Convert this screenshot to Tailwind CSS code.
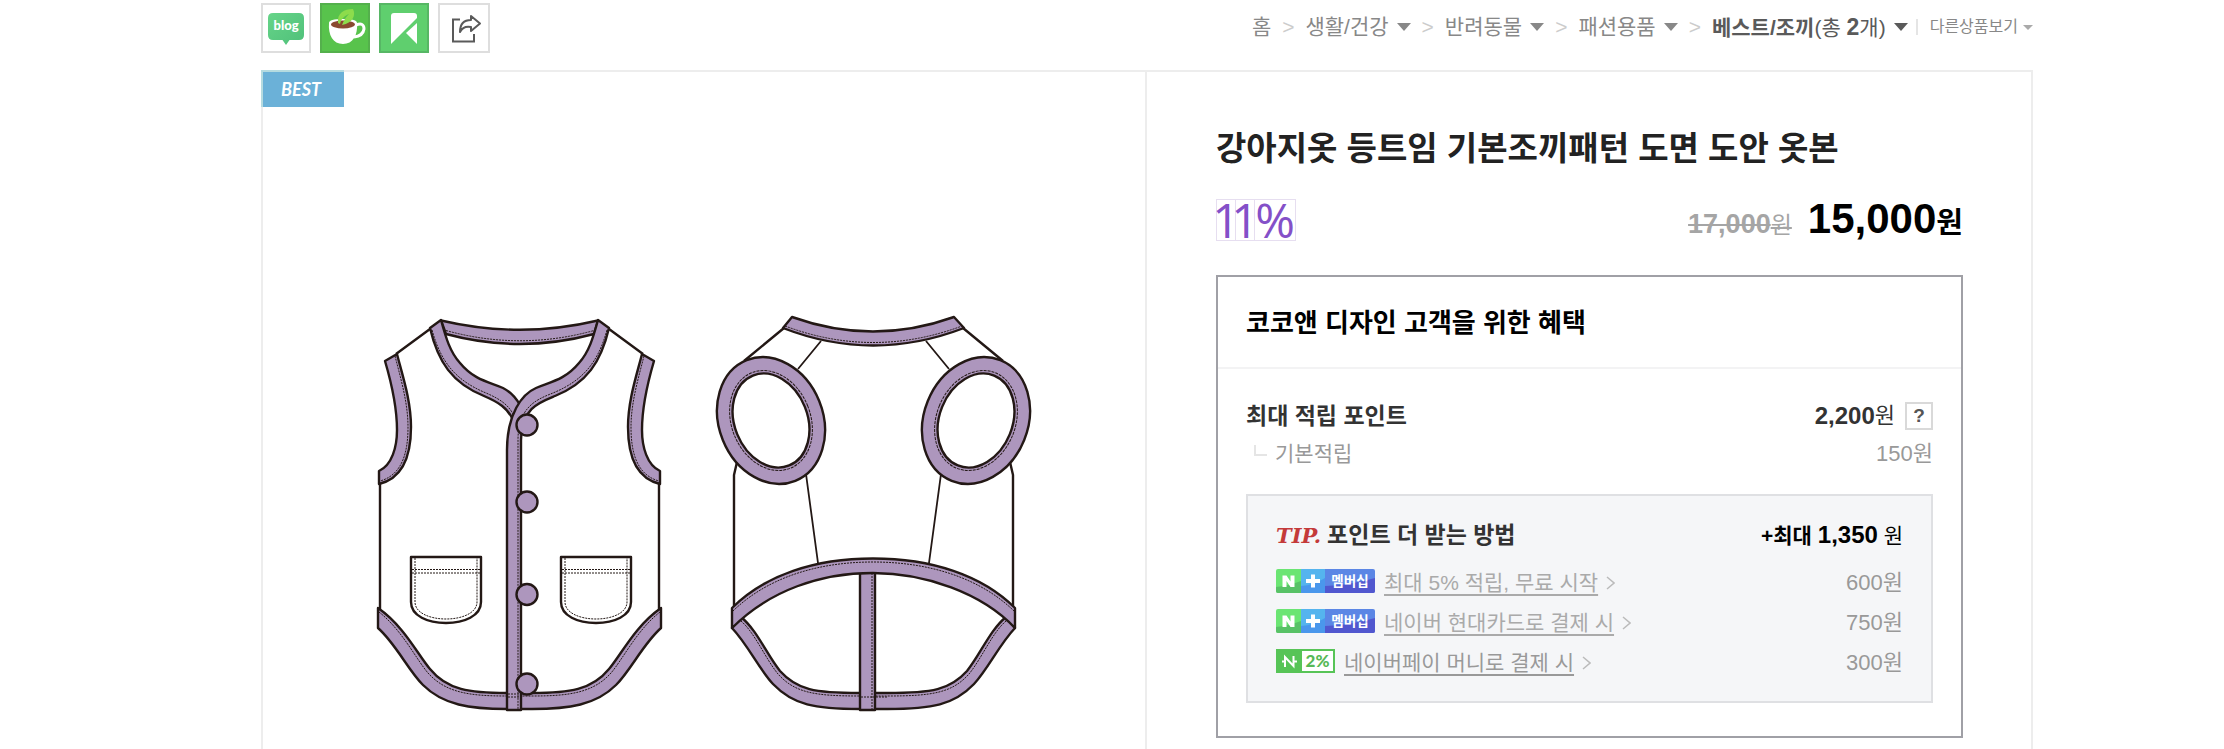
<!DOCTYPE html>
<html lang="ko">
<head>
  <meta charset="UTF-8" />
  <meta name="viewport" content="width=device-width, initial-scale=1" />
  <title>강아지옷 등트임 기본조끼패턴 도면 도안 옷본</title>
  <script src="https://cdn.jsdelivr.net/npm/@tailwindcss/browser@4"></script>
</head>
<body class="bg-white text-[#333] font-['Liberation_Sans','Noto_Sans_CJK_KR',sans-serif]">
  <div class="min-h-screen flex flex-col w-full max-w-[1842px] mx-auto pl-[70px] pt-[3px]">

    <!-- 상단: 공유 버튼 + 카테고리 경로 -->
    <header class="flex justify-between h-[50px] mb-[17px]">
      <div class="flex gap-[9px]">
        <a href="#" aria-label="블로그" class="block size-[50px] border-2 border-[#dedede] bg-white">
          <svg viewBox="0 0 46 46" class="size-full">
            <defs>
              <linearGradient id="blogBg" x1="0" y1="0" x2="1" y2="1">
                <stop offset="0" stop-color="#66d488" />
                <stop offset="1" stop-color="#4fc07a" />
              </linearGradient>
            </defs>
            <path d="M10 8H36Q41 8 41 13V30Q41 35 36 35H26.500L23 40L19.500 35H10Q5 35 5 30V13Q5 8 10 8Z" fill="url(#blogBg)" />
            <text x="23" y="25" text-anchor="middle" font-family="Lato" font-weight="900" font-size="13" fill="#fff">blog</text>
          </svg>
        </a>
        <a href="#" aria-label="카페" class="block size-[50px] border-2 border-[#54b04c] bg-[#58c34c]">
          <svg viewBox="0 0 46 46" class="size-full">
            <path d="M34 20Q42 17 42 24Q41 31 32 32" fill="none" stroke="#fff" stroke-width="3" />
            <path d="M7 18Q7 14 21 14T35 18C36 30 31 39 21 39S6 30 7 18Z" fill="#fff" />
            <ellipse cx="21" cy="19.500" rx="12" ry="4" fill="#8a4a30" />
            <path d="M16 18C15 8 22 4 31 4C34 10 31 18 20 20C22 15 24 12 27 9C22 11 19 14 18 19Z" fill="#8ddc4c" />
          </svg>
        </a>
        <a href="#" aria-label="북마크" class="block size-[50px] border-2 border-[#57b765] bg-[#5fcf6e]">
          <svg viewBox="0 0 46 46" class="size-full">
            <path d="M10 11Q10 8 13 8H33Q36 8 36 11V13L10 39Z" fill="#fff" />
            <path d="M36 18V39L25 28Z" fill="#fff" />
          </svg>
        </a>
        <button type="button" aria-label="공유" class="block w-[52px] h-[50px] border-2 border-[#dedede] bg-white">
          <svg viewBox="0 0 48 46" class="size-full" fill="none" stroke="#5a5a5a" stroke-width="2">
            <path d="M20 14.500H13V36.500H34V29" />
            <path d="M20 27C20 19 24 15 31 15V11L40 18.500L31 26V22C26 21 22 23 20 27Z" stroke-linejoin="round" />
          </svg>
        </button>
      </div>

      <nav class="flex items-center h-12 text-[21px] leading-8 text-[#888] whitespace-nowrap">
        <a href="#">홈</a>
        <span class="mx-[11px] text-[#ccc]">&gt;</span>
        <a href="#">생활/건강</a>
        <button type="button" aria-label="생활/건강 펼치기" class="ml-2"><svg class="w-[14px] h-[8px]" viewBox="0 0 14 8"><path d="M0 0H14L7 8Z" fill="#888" /></svg></button>
        <span class="mx-[11px] text-[#ccc]">&gt;</span>
        <a href="#">반려동물</a>
        <button type="button" aria-label="반려동물 펼치기" class="ml-2"><svg class="w-[14px] h-[8px]" viewBox="0 0 14 8"><path d="M0 0H14L7 8Z" fill="#888" /></svg></button>
        <span class="mx-[11px] text-[#ccc]">&gt;</span>
        <a href="#">패션용품</a>
        <button type="button" aria-label="패션용품 펼치기" class="ml-2"><svg class="w-[14px] h-[8px]" viewBox="0 0 14 8"><path d="M0 0H14L7 8Z" fill="#888" /></svg></button>
        <span class="mx-[11px] text-[#ccc]">&gt;</span>
        <a href="#" class="text-[#5a5a5a]"><strong>베스트/조끼</strong>(총 <strong class="text-[23px]">2</strong>개)</a>
        <button type="button" aria-label="베스트/조끼 펼치기" class="ml-2"><svg class="w-[14px] h-[8px]" viewBox="0 0 14 8"><path d="M0 0H14L7 8Z" fill="#5a5a5a" /></svg></button>
        <span class="w-[2px] h-4 ml-2 mr-3 bg-[#e5e5e5]"></span>
        <button type="button" class="flex items-center gap-[5px] text-[16px]">다른상품보기
          <svg class="w-[10px] h-[5px]" viewBox="0 0 10 5"><path d="M0 0H10L5 5Z" fill="#aaa" /></svg>
        </button>
      </nav>
    </header>

    <main class="grow grid grid-cols-2 border-2 border-b-0 border-[#ededed]">
      <!-- 상품 이미지 -->
      <section class="relative border-r-2 border-[#ededed] pl-[2px] pt-[228px]">
        <span class="absolute -left-[2px] -top-[2px] w-[83px] h-[37px] pl-[18px] border-l-2 border-t-2 border-[#b5dbe0] bg-[#6bb1d8] text-white text-[18px] leading-[34px] font-bold italic font-[Lato,sans-serif]">BEST</span>

        <svg class="block w-full max-w-[690px] mx-auto" viewBox="360 300 690 430" role="img" aria-label="강아지 조끼 도안" fill="none" stroke="#231815" stroke-width="2.400" stroke-linejoin="round">
          <defs>
            <g id="frontSide">
              <path d="M430 329L396 354M380 484V610" />
              <path d="M385 361L397 354C402 374 411 400 411 427C411 455 404 478 379 484V471C392 465 397 447 397 430C397 405 390 378 385 361Z" fill="#ad96bd" />
              <path d="M395 356C400 376 408 402 408 427C408 453 402 475 380 481" stroke-width="1" stroke-dasharray="2 1" />
              <path d="M378 608C404 626 418 655 430 669C447 690 470 693 507 693H520V709H507C470 709 443 705 423 685C408 670 396 644 378 628Z" fill="#ad96bd" />
              <path d="M379 612C402 630 416 659 428 673C446 693 470 696 507 696H520" stroke-width="1" stroke-dasharray="2 1" />
            </g>
            <g id="pocket">
              <path d="M411 557H481V602C481 616 464 623 446 623S411 616 411 602Z" />
              <path d="M415 558V602C415 613 430 619 446 619S477 613 477 602V558M412 569.500H480M412 573H480" stroke-width="1" stroke-dasharray="2 1" />
            </g>
            <g id="backSide">
              <path d="M784 328L744 361M737 462L734 475V609" />
              <path d="M821 341L798 369M806 474L818 563" stroke-width="1.800" />
              <g transform="translate(771 420.500) rotate(-22)">
                <ellipse rx="52" ry="65" fill="#ad96bd" />
                <ellipse rx="39.500" ry="51.500" stroke-width="1" stroke-dasharray="3 1" />
                <ellipse rx="36.500" ry="48.500" fill="#fff" />
              </g>
              <path d="M741 617C757 630 767 655 780 671C797 690 815 693 860 693H874V709H860C815 709 793 705 773 684C759 669 748 645 732 628Z" fill="#ad96bd" />
              <path d="M741 621C755 633 765 658 778 674C795 693 815 696 860 696H874" stroke-width="1" stroke-dasharray="2 1" />
            </g>
          </defs>

          <!-- 앞면 -->
          <use href="#frontSide" />
          <use href="#frontSide" transform="translate(1039 0) scale(-1 1)" />
          <use href="#pocket" />
          <use href="#pocket" transform="translate(150 0)" />
          <path d="M441 320.500Q520 339 598 320.500L594 334Q520 354 446 334Z" fill="#ad96bd" />
          <path d="M446 330.500Q520 351 594 330.500" stroke-width="1" stroke-dasharray="2 1" />
          <path d="M430 328L441 320C446 338 450 352 460 363C474 380 489 382 503 388C511 392 516 398 520 405L513 420C508 408 498 402 484 396C452 383 438 362 430 328Z" fill="#ad96bd" />
          <path d="M432 330C441 362 455 380 486 393C500 399 509 405 514 416" stroke-width="1" stroke-dasharray="2 1" />
          <path d="M609 328L598 320C593 338 589 352 579 363C565 380 550 382 536 388C522 394 507 414 507 450V710H521V440C521 408 540 402 555 396C587 383 601 362 609 328Z" fill="#ad96bd" />
          <path d="M607 330C598 362 584 380 553 393C538 399 518 406 518 440V709M508 694H520M508 697H520" stroke-width="1" stroke-dasharray="2 1" />
          <g fill="#ad96bd">
            <circle cx="527" cy="425" r="10.500" />
            <circle cx="527" cy="502" r="10.500" />
            <circle cx="527" cy="594.500" r="10.500" />
            <circle cx="527" cy="684" r="10.500" />
          </g>

          <!-- 뒷면 -->
          <use href="#backSide" />
          <use href="#backSide" transform="translate(1747 0) scale(-1 1)" />
          <path d="M792 317Q873 346 954 317L964 328Q873 363 783 328Z" fill="#ad96bd" />
          <path d="M785 326Q873 359 962 326" stroke-width="1" stroke-dasharray="2 1" />
          <path d="M860 571H875V710H860Z" fill="#ad96bd" />
          <path d="M872 573V709M861 697H887" stroke-width="1" stroke-dasharray="2 1" />
          <path d="M732 608C765 575 815 558.500 873 558.500S982 575 1015 608V628C982 593 925 573 873 573S770 590 732 628Z" fill="#ad96bd" />
          <path d="M733 611C766 579 815 562 873 562S981 579 1014 611" stroke-width="1" stroke-dasharray="2 1" />
        </svg>
      </section>

      <!-- 상품 정보 -->
      <section class="pl-[69px] pr-[68px] pt-[57px] pb-[11px]">
        <h1 class="text-[33px] leading-10 font-bold text-[#222]">강아지옷 등트임 기본조끼패턴 도면 도안 옷본</h1>

        <div class="flex justify-between items-start mt-[30px]">
          <p class="flex text-[48px] leading-10 text-[#8450c8] font-['Open_Sans',sans-serif]" aria-label="11%">
            <span class="w-[19px] border border-r-0 border-[#e6def0] flex justify-center">1</span>
            <span class="w-[19px] border border-r-0 border-[#e6def0] flex justify-center">1</span>
            <span class="w-[42px] border border-[#e6def0] flex justify-center">%</span>
          </p>
          <p class="flex items-baseline leading-[40px]">
            <del class="mr-4 text-[27px] font-bold text-[#a5a5a5]">17,000<span class="text-[23px] font-normal">원</span></del>
            <strong class="text-[42px] text-black">15,000<span class="text-[29px]">원</span></strong>
          </p>
        </div>

        <div class="mt-[30px] border-2 border-[#a0a0a6]">
          <h2 class="h-[92px] px-7 border-b-2 border-[#f3f3f4] text-[26px] leading-[92px] font-bold text-black">코코앤 디자인 고객을 위한 혜택</h2>

          <div class="px-7 pt-8 pb-[33px]">
            <div class="flex justify-between items-center h-[30px]">
              <strong class="text-[23px] leading-[30px]">최대 적립 포인트</strong>
              <span class="flex items-center text-[22px] leading-[30px]">
                <strong class="text-[24px]">2,200</strong>원
                <button type="button" aria-label="도움말" class="size-7 ml-[10px] border-2 border-[#d9d9d9] text-[19px] leading-6 font-bold text-[#555]">?</button>
              </span>
            </div>
            <div class="flex justify-between items-center h-[30px] mt-2 text-[#999]">
              <span class="flex items-center text-[21px] leading-[30px]">
                <i class="w-[13px] h-[11px] ml-2 mr-2 mb-2 border-l-2 border-b-2 border-[#e5e5e5]"></i>기본적립
              </span>
              <span class="text-[22px] leading-[30px]">150원</span>
            </div>

            <div class="mt-[25px] px-7 pt-6 pb-[18px] border-2 border-[#dfe0e3] bg-[#f5f6f8]">
              <div class="flex justify-between items-center h-[30px]">
                <h3 class="flex items-baseline text-[23px] leading-[30px] font-bold"><em class="mr-[6px] text-[21px] text-[#c43a3a] font-['DejaVu_Serif',serif]">TIP.</em>포인트 더 받는 방법</h3>
                <span class="text-[21px] leading-[30px] text-black"><strong>+최대 <span class="text-[24px]">1,350</span></strong> 원</span>
              </div>

              <ul class="mt-[13px] text-[#999]">
                <li class="flex justify-between items-center h-10">
                  <a href="#" class="flex items-center text-[21px] leading-[30px] text-[#aaa]">
                    <svg class="w-[99px] h-6 mr-[9px] mb-1" viewBox="0 0 99 24" aria-label="네이버플러스 멤버십">
                      <defs>
                        <clipPath id="badgeClip"><rect width="99" height="24" rx="2" /></clipPath>
                        <g id="plusBadge" clip-path="url(#badgeClip)">
                          <path d="M0 0H25V24H0Z" fill="#6be573" />
                          <path d="M0 18Q12 17 25 12V24H0Z" fill="#58c267" />
                          <path d="M25 0H49V24H25Z" fill="#55b4ee" />
                          <path d="M25 17Q38 16 49 9V24H25Z" fill="#4a97ec" />
                          <path d="M49 0H99V24H49Z" fill="#5b86e5" />
                          <path d="M49 17Q75 16 99 9V24H49Z" fill="#5157cf" />
                          <path d="M6.500 6.500H10.500L14.500 12.500V6.500H18.500V18H14.500L10.500 12V18H6.500ZM35 5.500H39V10H44V14H39V18.500H35V14H30V10H35Z" fill="#fff" />
                          <text x="74" y="17" text-anchor="middle" font-family="Noto Sans CJK KR" font-size="13.500" font-weight="700" fill="#fff">멤버십</text>
                        </g>
                      </defs>
                      <use href="#plusBadge" />
                    </svg>
                    <span class="underline underline-offset-4">최대 5% 적립, 무료 시작</span>
                    <svg class="w-[9px] h-[14px] ml-2" viewBox="0 0 9 14" fill="none" stroke="#bbb" stroke-width="1.500"><path d="M1 1L8 7L1 13" /></svg>
                  </a>
                  <span class="text-[22px] leading-[30px]">600원</span>
                </li>
                <li class="flex justify-between items-center h-10">
                  <a href="#" class="flex items-center text-[21px] leading-[30px] text-[#aaa]">
                    <svg class="w-[99px] h-6 mr-[9px] mb-1" viewBox="0 0 99 24" aria-label="네이버플러스 멤버십"><use href="#plusBadge" /></svg>
                    <span class="underline underline-offset-4">네이버 현대카드로 결제 시</span>
                    <svg class="w-[9px] h-[14px] ml-2" viewBox="0 0 9 14" fill="none" stroke="#bbb" stroke-width="1.500"><path d="M1 1L8 7L1 13" /></svg>
                  </a>
                  <span class="text-[22px] leading-[30px]">750원</span>
                </li>
                <li class="flex justify-between items-center h-10">
                  <a href="#" class="flex items-center text-[21px] leading-[30px]">
                    <svg class="w-[59px] h-6 mr-[9px] mb-1" viewBox="0 0 59 24" aria-label="네이버페이 2%">
                      <path d="M0 0H59V24H0Z" fill="#57c457" />
                      <path d="M26 2H57V22H26Z" fill="#fff" />
                      <path d="M9 18V8L17.500 17V7M6 12.500H9M17.500 12.500H21" fill="none" stroke="#fff" stroke-width="2" />
                      <text x="41.500" y="18" text-anchor="middle" font-family="Lato" font-size="17" font-weight="900" fill="#57b957">2%</text>
                    </svg>
                    <span class="underline underline-offset-4">네이버페이 머니로 결제 시</span>
                    <svg class="w-[9px] h-[14px] ml-2" viewBox="0 0 9 14" fill="none" stroke="#bbb" stroke-width="1.500"><path d="M1 1L8 7L1 13" /></svg>
                  </a>
                  <span class="text-[22px] leading-[30px]">300원</span>
                </li>
              </ul>
            </div>
          </div>
        </div>
      </section>
    </main>
  </div>
</body>
</html>
